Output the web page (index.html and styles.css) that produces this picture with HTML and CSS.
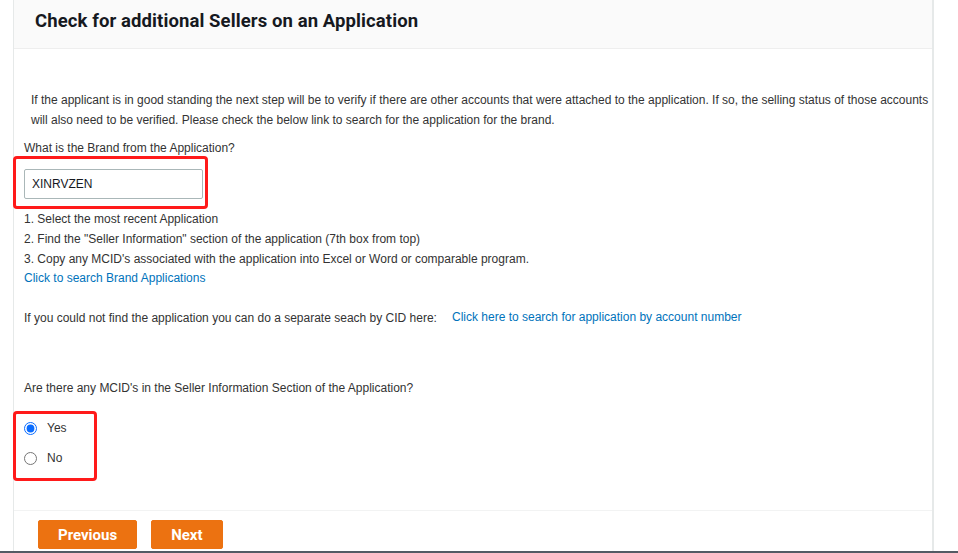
FILE: index.html
```html
<!DOCTYPE html>
<html>
<head>
<meta charset="utf-8">
<link rel="stylesheet" href="styles.css">
</head>
<body>
<div class="page">
  <div class="panel">
    <div class="panel-header">
      <h1 class="title">Check for additional Sellers on an Application</h1>
    </div>
    <div class="panel-body">
      <p class="intro">If the applicant is in good standing the next step will be to verify if there are other accounts that were attached to the application. If so, the selling status of those accounts will also need to be verified. Please check the below link to search for the application for the brand.</p>
      <div class="field">
        <div class="label">What is the Brand from the Application?</div>
        <input class="text-input" type="text" value="XINRVZEN">
        <div class="annot annot-brand"></div>
      </div>
      <ol class="steps">
        <li>1. Select the most recent Application</li>
        <li>2. Find the "Seller Information" section of the application (7th box from top)</li>
        <li>3. Copy any MCID's associated with the application into Excel or Word or comparable program.</li>
      </ol>
      <a class="link" href="#">Click to search Brand Applications</a>
      <div class="cid-row">
        <span class="cid-text">If you could not find the application you can do a separate seach by CID here:</span>
        <a class="link" href="#">Click here to search for application by account number</a>
      </div>
      <div class="question">Are there any MCID's in the Seller Information Section of the Application?</div>
      <div class="radios">
        <label class="radio-row"><input type="radio" name="mcid" checked><span>Yes</span></label>
        <label class="radio-row"><input type="radio" name="mcid"><span>No</span></label>
        <div class="annot annot-radio"></div>
      </div>
    </div>
    <div class="panel-footer">
      <button class="btn">Previous</button>
      <button class="btn">Next</button>
    </div>
  </div>
  <div class="bottom-bar"></div>
</div>
</body>
</html>
```
FILE: styles.css
```css
html, body {
  margin: 0;
  padding: 0;
  background: #ffffff;
}
body {
  font-family: "Liberation Sans", Arial, sans-serif;
  font-size: 12px;
  color: #333333;
}
.page {
  width: 958px;
  height: 553px;
  overflow: hidden;
  display: flex;
  flex-direction: column;
}
.panel {
  margin-left: 13px;
  width: 918px;
  border-left: 1px solid #e6e9e9;
  border-right: 2px solid #e6e9e9;
  display: flex;
  flex-direction: column;
  height: 551px;
}
.panel-header {
  height: 48px;
  background: #fafafa;
  border-bottom: 1px solid #eeeeee;
  display: flex;
  align-items: center;
  padding-left: 21px;
  flex: none;
}
.title {
  margin: 0;
  font-family: Roboto, "Liberation Sans", sans-serif;
  font-weight: 700;
  font-size: 18.5px;
  letter-spacing: 0.1px;
  color: #16191f;
  position: relative;
  top: -3px;
}
.panel-body {
  padding: 41px 0 0 10px;
  display: flex;
  flex-direction: column;
  align-items: flex-start;
  flex: 1;
}
.intro {
  margin: 0 0 8px 0;
  padding-left: 7px;
  line-height: 20px;
}
.field {
  position: relative;
  display: flex;
  flex-direction: column;
  align-items: flex-start;
}
.label {
  line-height: 20px;
}
.text-input {
  margin-top: 11px;
  box-sizing: border-box;
  width: 179px;
  height: 30px;
  border: 1px solid #aab7b8;
  border-radius: 2px;
  padding: 0 7px;
  font-family: "Liberation Sans", Arial, sans-serif;
  font-size: 12px;
  color: #16191f;
  background: #fff;
}
.annot {
  position: absolute;
  border: 3px solid #ff1a1a;
  border-radius: 4px;
  box-sizing: border-box;
}
.annot-brand {
  left: -11px;
  top: 18px;
  width: 195px;
  height: 53px;
}
.steps {
  list-style: none;
  margin: 10px 0 0 0;
  padding: 0;
}
.steps li {
  line-height: 20px;
}
.link {
  color: #0073bb;
  text-decoration: none;
  line-height: 19px;
}
.cid-row {
  margin-top: 20px;
  line-height: 20px;
  display: flex;
}
.cid-text {
  width: 428px;
}
.question {
  margin-top: 50px;
  line-height: 20px;
}
.radios {
  position: relative;
  margin-top: 20px;
  display: flex;
  flex-direction: column;
  gap: 10px;
}
.radio-row {
  display: flex;
  align-items: center;
  height: 20px;
  font-size: 12px;
}
.radio-row input {
  margin: 0 10px 0 0;
  width: 13px;
  height: 13px;
  accent-color: #0a6cff;
}
.annot-radio {
  left: -11px;
  top: -7px;
  width: 84px;
  height: 70px;
}
.panel-footer {
  border-top: 1px solid #f2f3f3;
  height: 41px;
  display: flex;
  align-items: flex-start;
  gap: 14px;
  padding: 9px 0 0 24px;
  box-sizing: border-box;
  flex: none;
}
.btn {
  height: 29px;
  padding: 0 19px;
  background: #ec7211;
  border: 1px solid #ec7211;
  border-radius: 2px;
  color: #ffffff;
  font-family: Roboto, "Liberation Sans", sans-serif;
  font-weight: 700;
  font-size: 15px;
}
.bottom-bar {
  height: 2px;
  background: #545b64;
}
```
